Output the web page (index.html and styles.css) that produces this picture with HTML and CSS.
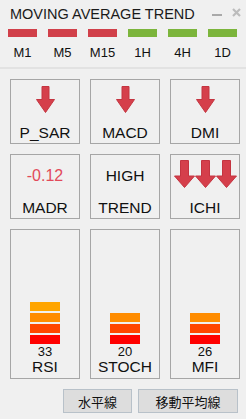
FILE: index.html
```html
<!DOCTYPE html>
<html>
<head>
    <meta charset="UTF-8">
    <title>Moving Average Trend</title>
    <link rel="stylesheet" href="styles.css">
</head>
<body>
    <svg width="0" height="0" class="defs">
        <symbol id="arrow" viewBox="0 0 19 27">
            <path d="M6 0.5H13V13.5H18.5L9.5 26.5L0.5 13.5H6Z" fill="#d53f4b" stroke="#c43440" stroke-width="1"/>
        </symbol>
        <symbol id="arrow-wide" viewBox="0 0 21 28">
            <path d="M6.5 0.5H14.5V16H20.5L10.5 27.5L0.5 16H6.5Z" fill="#d53f4b" stroke="#c43440" stroke-width="1"/>
        </symbol>
    </svg>

    <div class="panel">
        <div class="titlebar">
            <span class="title">MOVING AVERAGE TREND</span>
            <span class="controls">
                <svg class="min" width="10" height="2"><rect width="10" height="2" fill="#a9a9a9"/></svg>
                <svg class="close" width="9" height="9" viewBox="0 0 9 9">
                    <path d="M1 1L8 8M8 1L1 8" stroke="#bcbcbc" stroke-width="2.2"/>
                </svg>
            </span>
        </div>

        <!-- timeframe trend -->
        <div class="trend-row">
            <div class="tf"><span class="bar down"></span><span class="tf-label">M1</span></div>
            <div class="tf"><span class="bar down"></span><span class="tf-label">M5</span></div>
            <div class="tf"><span class="bar down"></span><span class="tf-label">M15</span></div>
            <div class="tf"><span class="bar up"></span><span class="tf-label">1H</span></div>
            <div class="tf"><span class="bar up"></span><span class="tf-label">4H</span></div>
            <div class="tf"><span class="bar up"></span><span class="tf-label">1D</span></div>
        </div>

        <div class="sep"></div>

        <div class="grid">
            <div class="cell">
                <svg class="arrow"><use href="#arrow"/></svg>
                <span class="name">P_SAR</span>
            </div>
            <div class="cell">
                <svg class="arrow"><use href="#arrow"/></svg>
                <span class="name">MACD</span>
            </div>
            <div class="cell">
                <svg class="arrow"><use href="#arrow"/></svg>
                <span class="name">DMI</span>
            </div>

            <div class="cell">
                <span class="value neg">-0.12</span>
                <span class="name">MADR</span>
            </div>
            <div class="cell">
                <span class="value">HIGH</span>
                <span class="name">TREND</span>
            </div>
            <div class="cell ichi">
                <div class="ichi-arrows">
                    <svg class="arrow-wide"><use href="#arrow-wide"/></svg>
                    <svg class="arrow-wide"><use href="#arrow-wide"/></svg>
                    <svg class="arrow-wide"><use href="#arrow-wide"/></svg>
                </div>
                <span class="name">ICHI</span>
            </div>

            <div class="cell osc">
                <div class="level">
                    <span class="lv lv4"></span>
                    <span class="lv lv3"></span>
                    <span class="lv lv2"></span>
                    <span class="lv lv1"></span>
                </div>
                <span class="num">33</span>
                <span class="name">RSI</span>
            </div>
            <div class="cell osc">
                <div class="level">
                    <span class="lv lv3"></span>
                    <span class="lv lv2"></span>
                    <span class="lv lv1"></span>
                </div>
                <span class="num">20</span>
                <span class="name">STOCH</span>
            </div>
            <div class="cell osc">
                <div class="level">
                    <span class="lv lv3"></span>
                    <span class="lv lv2"></span>
                    <span class="lv lv1"></span>
                </div>
                <span class="num">26</span>
                <span class="name">MFI</span>
            </div>
        </div>

        <div class="buttons">
            <button type="button" class="btn btn-h">水平線</button>
            <button type="button" class="btn btn-ma">移動平均線</button>
        </div>
    </div>
</body>
</html>
```

FILE: styles.css
```css
* {
    margin: 0;
    padding: 0;
    box-sizing: border-box;
}

body {
    background: #f0f0f0;
    font-family: "Liberation Sans", Arial, sans-serif;
    color: #111;
}

.defs {
    position: absolute;
}

.panel {
    width: 246px;
    height: 419px;
}

.titlebar {
    display: flex;
    align-items: flex-start;
    padding: 6px 5px 0 10px;
    height: 23px;
}
.title {
    font-size: 14.5px;
    line-height: 17px;
    color: #1a1a1a;
}
.controls {
    margin-left: auto;
    display: flex;
    align-items: flex-start;
}
.controls .min {
    display: block;
    margin-top: 8px;
}
.controls .close {
    display: block;
    margin-top: 2px;
    margin-left: 10px;
}

/* timeframe row */
.trend-row {
    display: flex;
    gap: 11px;
    padding: 6px 0 0 8px;
}
.tf {
    width: 29px;
    display: flex;
    flex-direction: column;
    align-items: center;
}
.bar {
    display: block;
    width: 29px;
    height: 8px;
}
.bar.down {
    background: #d1404a;
}
.bar.up {
    background: #7cb53c;
}
.tf-label {
    margin-top: 8px;
    font-size: 13px;
    line-height: 15px;
    white-space: nowrap;
}

.sep {
    margin-top: 7px;
    height: 2px;
    background: #e2e2e2;
}

/* indicator grid */
.grid {
    display: grid;
    grid-template-columns: repeat(3, 70px);
    grid-template-rows: 65px 65px 150px;
    gap: 10px;
    padding: 10px 0 0 10px;
}
.cell {
    border: 1px solid #a6a6a6;
    display: flex;
    flex-direction: column;
    align-items: center;
    padding: 6px 0 2px;
}
.cell .name {
    margin-top: auto;
    font-size: 15.5px;
    line-height: 17px;
}
.arrow {
    width: 19px;
    height: 27px;
}
.value {
    margin-top: 6px;
    font-size: 15.5px;
    line-height: 18px;
}
.value.neg {
    font-size: 16px;
    color: #e24a5a;
}
.ichi {
    padding-top: 5px;
}
.ichi-arrows {
    display: flex;
}
.arrow-wide {
    width: 21px;
    height: 28px;
}

/* oscillator levels */
.osc {
    justify-content: flex-end;
    padding-bottom: 3px;
}
.osc .name {
    margin-top: 0;
}
.level {
    display: flex;
    flex-direction: column;
    gap: 2px;
}
.lv {
    display: block;
    width: 30px;
    height: 9px;
}
.lv4 { background: #ffa500; }
.lv3 { background: #ff8c00; }
.lv2 { background: #ff4500; }
.lv1 { background: #ff0000; }
.num {
    margin-top: 2px;
    font-size: 13px;
    line-height: 12px;
}

.buttons {
    display: flex;
    justify-content: flex-end;
    gap: 6px;
    padding: 10px 8px 0 0;
}
.btn {
    height: 24px;
    background: #dddddd;
    border: 1px solid #b8c1c9;
    font-family: "Noto Sans CJK JP", sans-serif;
    font-size: 13px;
    color: #111;
}
.btn-h {
    width: 69px;
}
.btn-ma {
    width: 100px;
}
```
